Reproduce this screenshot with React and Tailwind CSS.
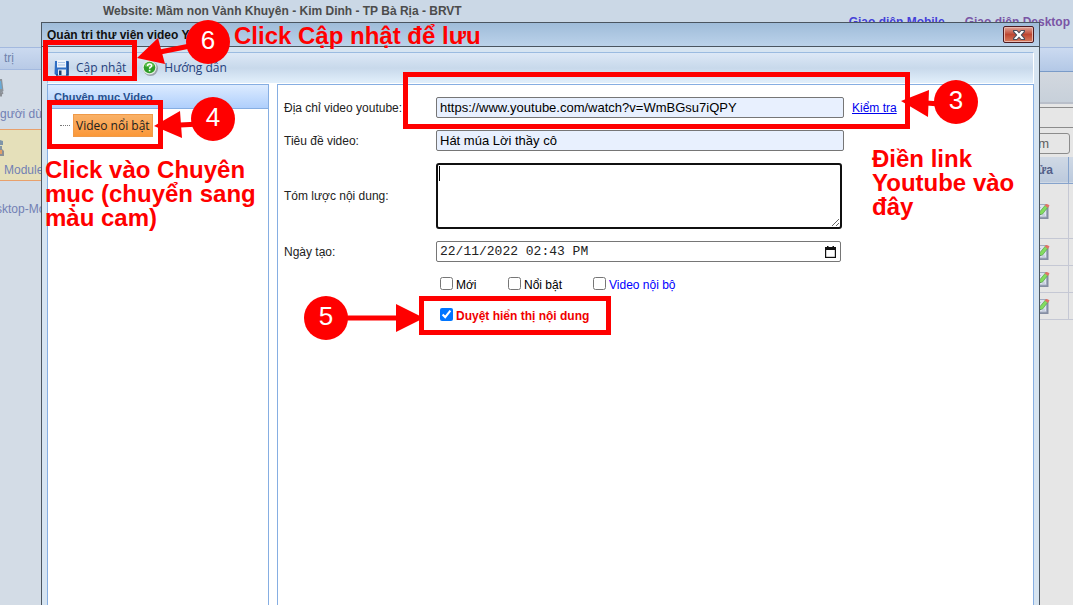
import React from "react";

const RED_TEXT =
  "absolute font-bold text-[24px] leading-6 text-[#ff0000] font-['Liberation_Sans',Arial,sans-serif]";

function SaveIcon() {
  return (
    <svg width="16" height="16" viewBox="0 0 16 16" aria-hidden="true">
      <path d="M1 1h13.500v14H2l-1.500-1z" fill="#2f6fc4" />
      <path d="M14 1.500V15H2" fill="none" stroke="#1c4788" strokeWidth="1.500" />
      <rect x="3" y="0" width="9" height="7.500" fill="#eef4fb" />
      <path d="M4 2.500h7M4 5h7" stroke="#a9c3e4" />
      <rect x="4" y="9.500" width="8" height="6" fill="#e6ebf1" />
      <rect x="5" y="10.500" width="2.500" height="4.500" fill="#1c3d70" />
    </svg>
  );
}

function HelpIcon() {
  return (
    <svg width="16" height="16" viewBox="0 0 16 16" aria-hidden="true">
      <circle cx="8.500" cy="8.500" r="7.500" fill="#9aa3ac" />
      <circle cx="7.500" cy="7.500" r="7" fill="#e4eee2" />
      <circle cx="7.500" cy="7.500" r="5.800" fill="#2f9e2a" />
      <path d="M2.500 6a5.300 5.300 0 0 1 10 0q-5 2.500-10 0z" fill="#63c451" />
      <path d="M5.600 6q0-2 2-2t2 1.800q0 1-1.100 1.500-.9.400-.9 1.400" fill="none" stroke="#fff" strokeWidth="1.500" />
      <rect x="6.800" y="9.800" width="1.600" height="1.600" fill="#fff" />
    </svg>
  );
}

function CloseIcon() {
  return (
    <svg width="12" height="10" viewBox="0 0 12 10" aria-hidden="true">
      <path d="M0 0h4l2 2 2-2h4v2L9 5l3 3v2H8L6 8l-2 2H0V8l3-3-3-3z" fill="#4c4f5c" />
      <path d="M1.200 1h2.500L6 3.500 8.300 1h2.500v.6L7.600 5l3.200 3.400V9H8.300L6 6.500 3.700 9H1.200v-.6L4.400 5 1.200 1.600z" fill="#fff" />
    </svg>
  );
}

function CalendarIcon() {
  return (
    <svg width="11" height="12" viewBox="0 0 11 12" aria-hidden="true">
      <path d="M2 0h1.500v1h4V0H9v1h2v11H0V1h2z" fill="#111" />
      <path d="M1.200 4h8.600v6.800H1.200z" fill="#fff" />
    </svg>
  );
}

function EditIcon() {
  return (
    <svg className="mx-auto" width="18" height="16" viewBox="0 0 18 16" aria-hidden="true">
      <path d="M1 2h15.500v14H1z" fill="#858ea3" />
      <path d="M1 1.500h13.500v12.500H1z" fill="#dde3ee" stroke="#a3abc0" />
      <path d="M3 4.500h6M3 7h5M3 9.500h4M10 12h3" stroke="#b3bdd3" />
      <path d="M7 12l1-3.500L13.500 2l2.500 2-5.500 7z" fill="#83dc60" stroke="#55a247" strokeWidth=".7" />
      <path d="M12.700 2.500L14 1q2-.5 3.500 1.500L15.800 5z" fill="#df7468" />
      <path d="M6.500 12.500l1-2 1.400 1.100z" fill="#475066" />
    </svg>
  );
}

function MonitorIcon() {
  return (
    <svg width="12" height="22" viewBox="0 0 12 22" aria-hidden="true">
      <path d="M0 1h2l1.500 12L1 15H0z" fill="#8d949b" />
      <path d="M0 3h1l1 8H0z" fill="#69abd8" />
      <path d="M0 16h1l2-1.500M0 17.500h2" fill="none" stroke="#8b8f95" strokeWidth="2" />
    </svg>
  );
}

function PeopleIcon() {
  return (
    <svg width="12" height="20" viewBox="0 0 12 20" aria-hidden="true">
      <path d="M0 2l3 1v4H0z" fill="#7f95a8" />
      <path d="M0 8h2v3H0z" fill="#8596a4" />
      <path d="M0 11h2l2 2v5H0z" fill="#8b8f95" />
      <path d="M0 12h2v4H0z" fill="#dfa067" />
    </svg>
  );
}

function SideNav() {
  const label = "block whitespace-nowrap text-[12px] leading-4";
  return (
    <nav className="w-[120px] shrink-0 overflow-hidden bg-[#d3dce6] text-[#7280b4]">
      <div className="h-[23px] border-y border-[#a3b9df] bg-gradient-to-b from-[#cbdaf0] to-[#b8cae6] pl-1 text-[12px] leading-[21px] text-[#6f82ab]">
        trị
      </div>
      <a href="#users" className="block h-[59px] pt-2">
        <MonitorIcon />
        <span className={label + " mt-1.5"}>gười dùng</span>
      </a>
      <a href="#modules" className="block h-[52px] border-y border-[#e8a06c] bg-[#e5e0ba] pt-2">
        <PeopleIcon />
        <span className={label + " mt-1 pl-1"}>Modules</span>
      </a>
      <a href="#desktop" className="block pt-5">
        <span className={label + " -ml-1"}>sktop-Module</span>
      </a>
    </nav>
  );
}

function BackgroundPage() {
  return (
    <div className="flex min-h-screen flex-col bg-[#cbd8e6]">
      <header className="flex h-[47px] items-start justify-between pl-[103px] pr-[3px] text-[12px] font-bold leading-4">
        <h1 className="pt-[3px] text-[#4c4c4c]">Website: Mầm non Vành Khuyên - Kim Dinh - TP Bà Rịa - BRVT</h1>
        <div className="flex gap-5 pt-[14px]">
          <a href="#mobile" className="text-[#4540d8]">Giao diện Mobile</a>
          <a href="#desktop-view" className="text-[#7a55a5]">Giao diện Desktop</a>
        </div>
      </header>
      <div className="flex flex-1">
        <SideNav />
        <main className="min-w-0 flex-1 bg-[#e6e6e6]">
          <div className="h-[25px] border-b border-t border-b-[#7a9bc8] border-t-[#a3b9df] bg-gradient-to-b from-[#cbdaf0] to-[#b3c8e6]" />
          <div className="h-8 border-b-2 border-[#b9bfca] bg-gradient-to-b from-[#d3d8df] to-[#c7d0da]" />
          <div className="mt-[3px] h-[21px] border-y border-[#8c8c8c]" />
          <div className="flex justify-end pb-[3px] pr-[3px] pt-[5px]">
            <button className="h-[21px] rounded-[3px] border border-[#8c8c8c] px-5 text-[13px] leading-4 text-[#606060]">Thêm</button>
          </div>
          <table className="w-full table-fixed border-collapse text-[12px] font-bold">
            <colgroup>
              <col />
              <col className="w-[53px]" />
              <col className="w-[5px]" />
            </colgroup>
            <thead>
              <tr className="h-[26px] border-b border-[#86a3cc] bg-gradient-to-b from-[#d0d9e5] to-[#bccadd] text-[#54618a]">
                <th />
                <th className="border-r border-[#86a3cc] p-0">Sửa</th>
                <th />
              </tr>
            </thead>
            <tbody>
              {["h-[55px]", "h-[27px]", "h-[27px]", "h-[27px]"].map((h, i) => (
                <tr key={i} className={"border-b border-[#c5c8d4] " + h}>
                  <td />
                  <td className="border-r border-[#c5c8d4] p-0"><EditIcon /></td>
                  <td />
                </tr>
              ))}
            </tbody>
          </table>
        </main>
      </div>
    </div>
  );
}

const INPUT =
  "block h-[21px] rounded-[2px] border border-[#767676] px-[3px] text-black outline-none";

function Check({ id, label, className = "text-black", checked = false }) {
  return (
    <div className="flex items-center gap-[3px]">
      <input id={id} type="checkbox" defaultChecked={checked} className="-mt-0.5 h-[13px] w-[13px] accent-[#0075ff]" />
      <label htmlFor={id} className={className}>{label}</label>
    </div>
  );
}

function VideoForm() {
  return (
    <form className="grid grid-cols-[152px_1fr] items-center gap-y-3 px-1.5 pt-3 text-[12px] leading-4 text-[#222]">
      <label htmlFor="url">Địa chỉ video youtube:</label>
      <div className="flex items-center gap-2">
        <input id="url" type="text" defaultValue="https://www.youtube.com/watch?v=WmBGsu7iQPY" className={INPUT + " w-[408px] bg-[#e8f0fe] text-[13px]"} />
        <a href="#check" className="text-[#0000ee] underline">Kiểm tra</a>
      </div>
      <label htmlFor="title">Tiêu đề video:</label>
      <input id="title" type="text" defaultValue="Hát múa Lời thầy cô" className={INPUT + " w-[408px] bg-[#e8f0fe] text-[13px]"} />
      <label htmlFor="summary">Tóm lược nội dung:</label>
      <div className="relative w-[406px]">
        <textarea id="summary" className="block h-[66px] w-full rounded-[3px] border-2 border-[#101010] bg-white px-0.5 py-px text-[13px] caret-transparent outline-none" />
        <span className="pointer-events-none absolute left-[3px] top-[3px] h-[15px] w-px bg-black" />
      </div>
      <label htmlFor="created">Ngày tạo:</label>
      <div className="flex h-[21px] w-[405px] items-center justify-between rounded-[2px] border border-[#767676] bg-white pl-[3px] pr-1">
        <input id="created" type="text" defaultValue="22/11/2022 02:43 PM" className="min-w-0 flex-1 text-[13px] leading-4 text-[#222] outline-none font-['Liberation_Mono',monospace]" />
        <button type="button" aria-label="Chọn ngày"><CalendarIcon /></button>
      </div>
      <div className="col-start-2 flex flex-col gap-2.5 pl-1">
        <div className="grid h-[21px] grid-cols-[68px_85px_1fr] items-center">
          <Check id="new" label="Mới" />
          <Check id="hot" label="Nổi bật" />
          <Check id="internal" label="Video nội bộ" className="text-[#0000ff]" />
        </div>
        <div className="flex h-[21px] items-center">
          <Check id="approve" label="Duyệt hiển thị nội dung" className="font-bold text-[#f00000]" checked />
        </div>
      </div>
    </form>
  );
}

function Dialog() {
  return (
    <section role="dialog" aria-labelledby="dialog-title" className="absolute bottom-0 left-[41px] right-[33px] top-[22px] flex flex-col border-x border-t border-[#4a5560] bg-[#d6e4f1]">
      <div className="flex h-6 shrink-0 items-center justify-between border-b border-[#4a5560] bg-gradient-to-b from-[#9fbcd9] to-[#bbd2ea] pl-[5px] pr-[5px]">
        <h2 id="dialog-title" className="text-[12px] font-bold text-[#111]">Quản trị thư viện video Youtube</h2>
        <button aria-label="Đóng" className="flex h-[17px] w-[31px] items-center justify-center rounded-[2px] border border-[#4b1a20] bg-gradient-to-b from-[#dfa49a] via-[#bd4632] to-[#d77b5d] shadow-[inset_0_0_0_1px_#e8b8ae]">
          <CloseIcon />
        </button>
      </div>
      <div className="flex min-h-0 flex-1 flex-col px-[5px] pt-[5px]">
        <div className="flex h-8 shrink-0 items-center gap-4 border border-b-white border-l-[#9bbbe0] border-r-white border-t-[#9bbbe0] bg-gradient-to-b from-[#dde8f6] via-[#c8d9eb] to-[#e2effb] pl-1.5 text-[12px] text-[#24407c] font-['Open_Sans',sans-serif]">
          <button className="flex items-center gap-1.5"><SaveIcon />Cập nhật</button>
          <button className="flex items-center gap-1.5"><HelpIcon />Hướng dẫn</button>
        </div>
        <div className="flex min-h-0 flex-1 gap-2 bg-white">
          <aside className="w-[222px] shrink-0 border-x border-t border-[#86aee2]">
            <h3 className="h-6 border-b border-[#86aee2] bg-gradient-to-b from-[#dcebff] to-[#afcffc] pl-1.5 text-[11px] font-bold leading-6 text-[#27508f]">Chuyên mục Video</h3>
            <div className="flex items-center gap-[3px] pl-3 pt-[5px]">
              <span className="w-[10px] border-t border-dotted border-[#777]" />
              <a href="#featured" className="flex h-[23px] items-center border border-[#f09a48] bg-gradient-to-b from-[#f9b167] to-[#fb9838] px-0.5 text-[12px] text-[#202020] font-['Open_Sans',sans-serif]">Video nổi bật</a>
            </div>
          </aside>
          <div className="min-w-0 flex-1 border-x border-t border-[#86aee2]">
            <VideoForm />
          </div>
        </div>
      </div>
    </section>
  );
}

function Marker({ n, className }) {
  return (
    <span className={"absolute flex h-11 w-11 items-center justify-center rounded-full bg-[#ff0000] pb-1 text-[26px] text-white " + className}>{n}</span>
  );
}

function Annotations() {
  const box = "absolute border-[5px] border-[#ff0000] ";
  return (
    <div className="pointer-events-none absolute inset-0 overflow-hidden">
      <div className={box + "left-[43px] top-10 h-[41px] w-[94px]"} />
      <div className={box + "left-[47px] top-[100px] h-[49px] w-[116px]"} />
      <div className={box + "left-[403px] top-[72px] h-[57px] w-[507px]"} />
      <div className={box + "left-[419px] top-[296px] h-[39px] w-[192px]"} />
      <svg className="absolute left-0 top-0" width="1073" height="605" viewBox="0 0 1073 605" fill="#ff0000" stroke="#ff0000" aria-hidden="true">
        <path d="M137 58L158 38 165 64zM154 126L180 111 182 138zM901 101L929 90 928 117zM424 318L396 304 396 332z" stroke="none" />
        <path d="M160 52L190 46M180 125L200 124M926 103L940 104M345 318H398" strokeWidth="5" />
      </svg>
      <Marker n="6" className="left-[186px] top-5" />
      <Marker n="4" className="left-[191px] top-[97px]" />
      <Marker n="3" className="left-[934px] top-20" />
      <Marker n="5" className="left-[304px] top-[296px]" />
      <p className={RED_TEXT + " left-[234px] top-6 whitespace-nowrap"}>Click Cập nhật để lưu</p>
      <p className={RED_TEXT + " left-[45px] top-[158px] whitespace-nowrap"}>Click vào Chuyên<br />mục (chuyển sang<br />màu cam)</p>
      <p className={RED_TEXT + " left-[872px] top-[147px] whitespace-nowrap"}>Điền link<br />Youtube vào<br />đây</p>
    </div>
  );
}

export default function App() {
  return (
    <div className="relative min-h-screen overflow-hidden font-['Liberation_Sans',Arial,sans-serif]">
      <BackgroundPage />
      <Dialog />
      <Annotations />
    </div>
  );
}
